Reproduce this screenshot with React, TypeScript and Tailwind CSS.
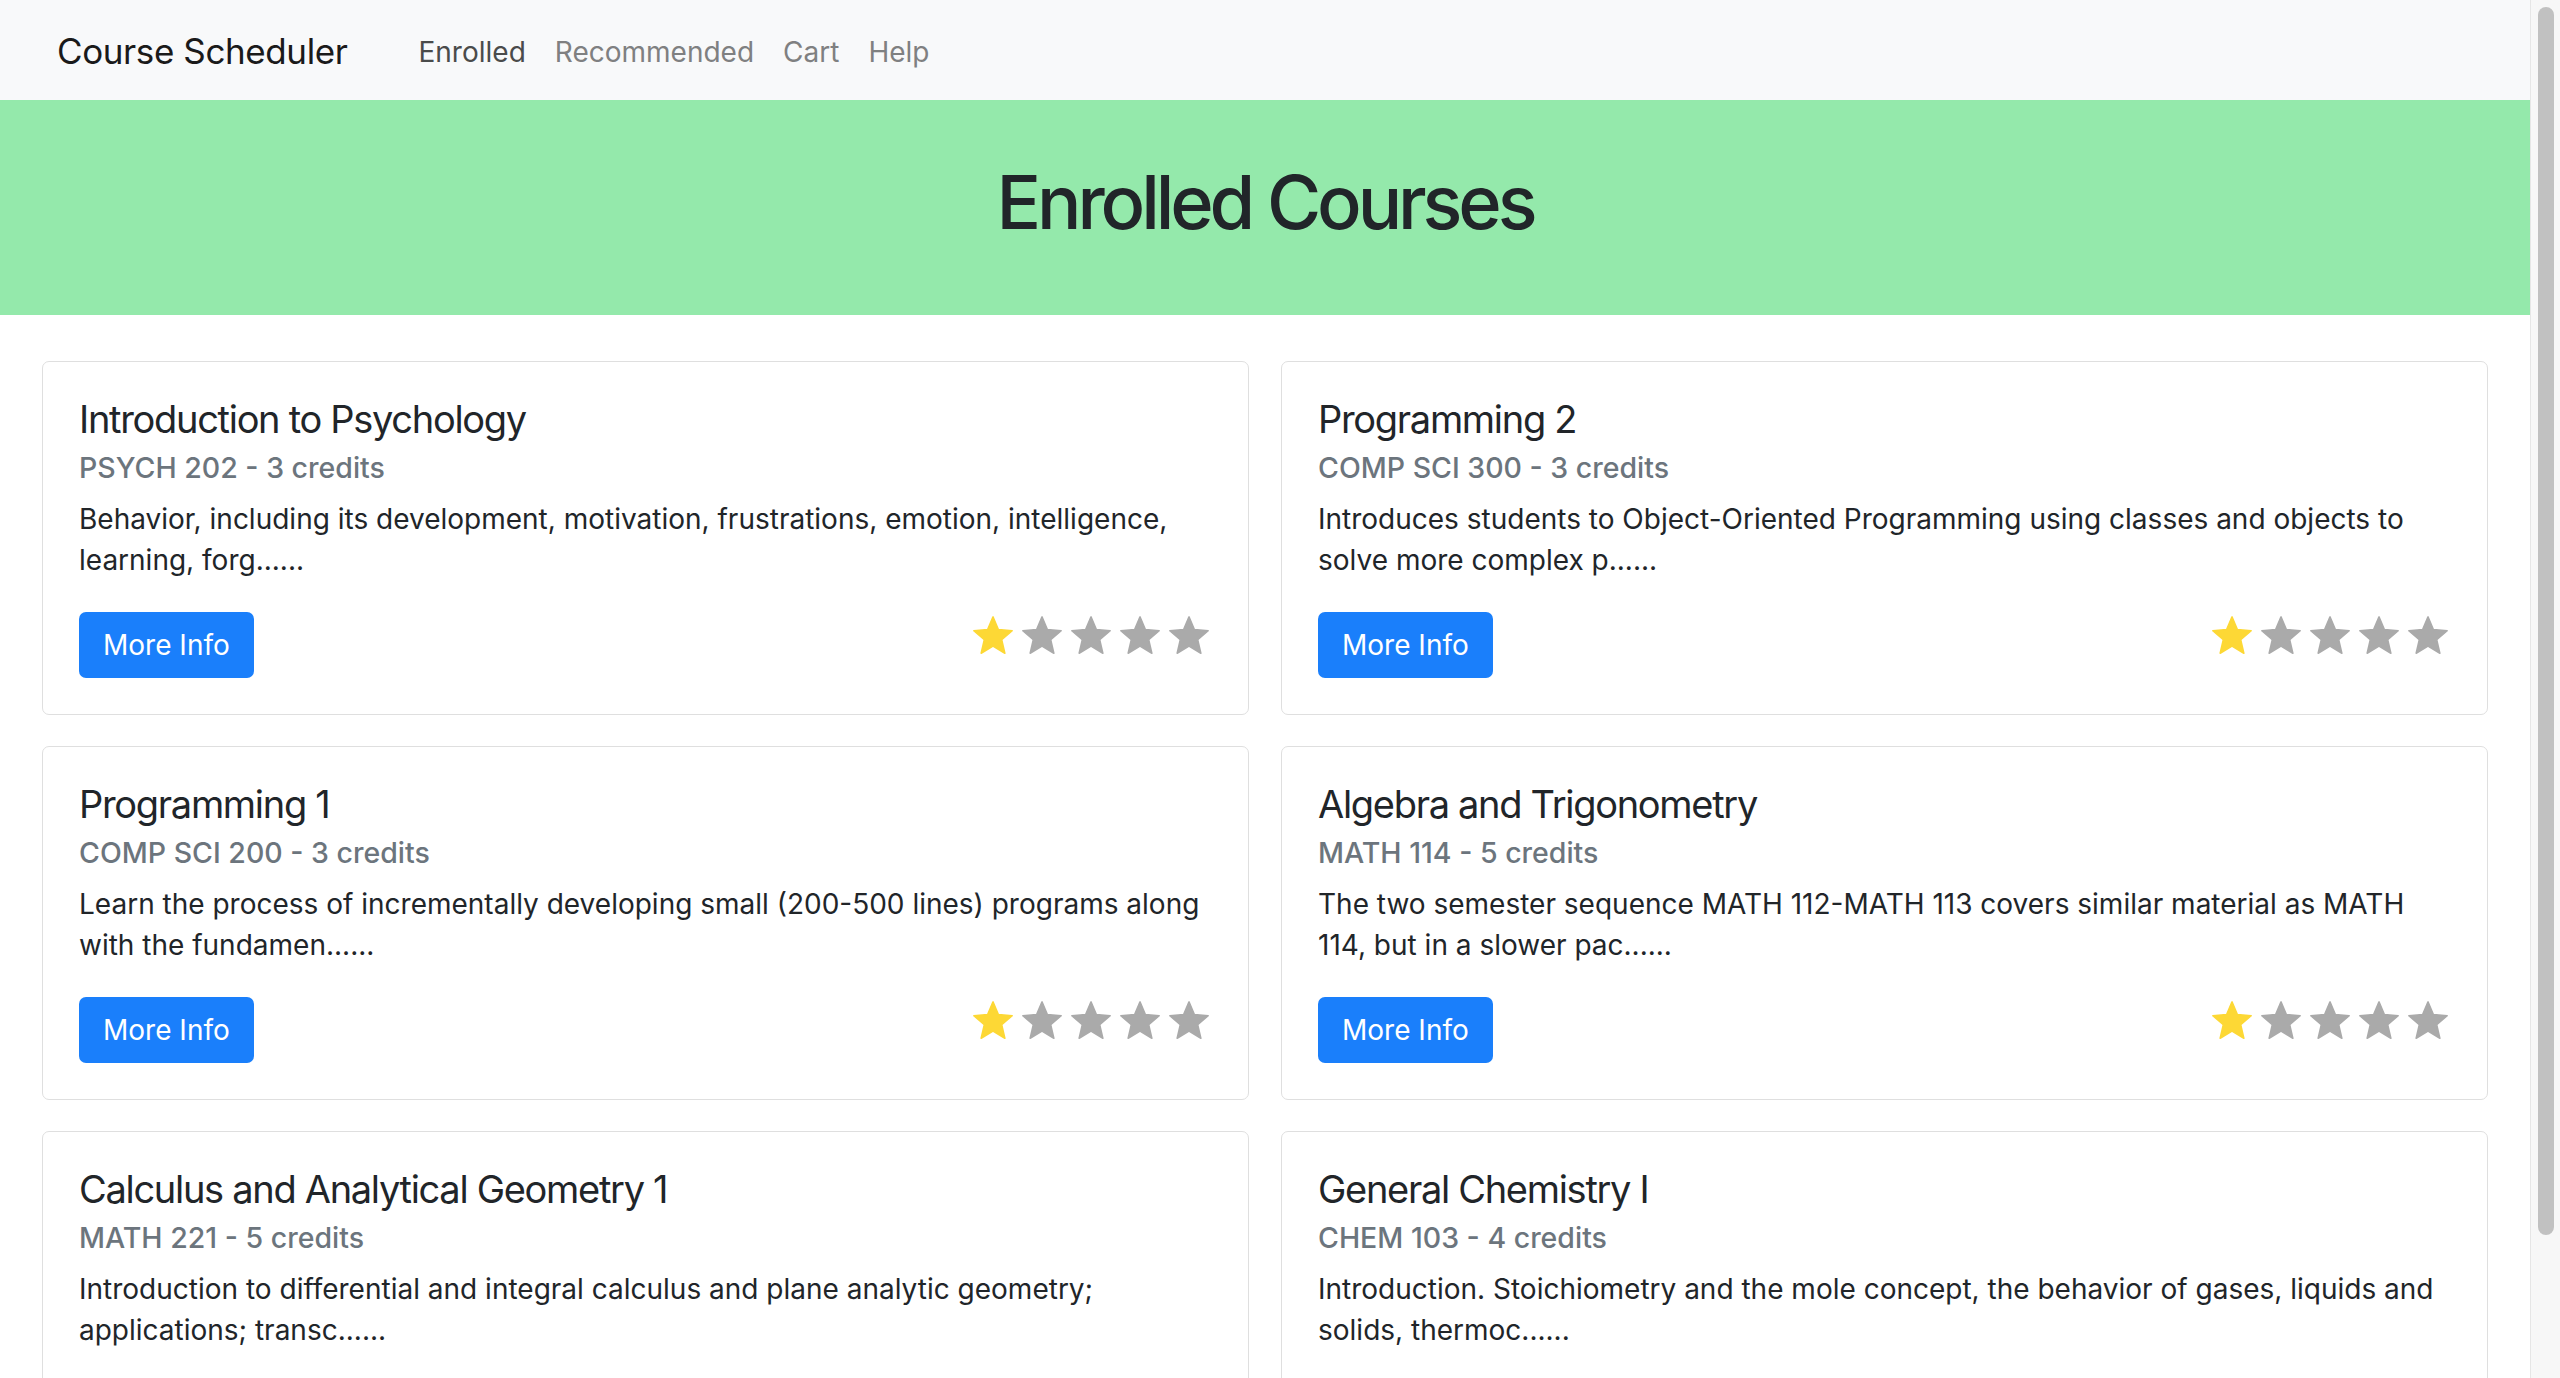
import React from "react";

type Course = {
  name: string;
  code: string;
  credits: number;
  description: string;
  rating: number;
};

const courses: Course[] = [
  {
    name: "Introduction to Psychology",
    code: "PSYCH 202",
    credits: 3,
    description: "Behavior, including its development, motivation, frustrations, emotion, intelligence, learning, forg......",
    rating: 1,
  },
  {
    name: "Programming 2",
    code: "COMP SCI 300",
    credits: 3,
    description: "Introduces students to Object-Oriented Programming using classes and objects to solve more complex p......",
    rating: 1,
  },
  {
    name: "Programming 1",
    code: "COMP SCI 200",
    credits: 3,
    description: "Learn the process of incrementally developing small (200-500 lines) programs along with the fundamen......",
    rating: 1,
  },
  {
    name: "Algebra and Trigonometry",
    code: "MATH 114",
    credits: 5,
    description: "The two semester sequence MATH 112-MATH 113 covers similar material as MATH 114, but in a slower pac......",
    rating: 1,
  },
  {
    name: "Calculus and Analytical Geometry 1",
    code: "MATH 221",
    credits: 5,
    description: "Introduction to differential and integral calculus and plane analytic geometry; applications; transc......",
    rating: 1,
  },
  {
    name: "General Chemistry I",
    code: "CHEM 103",
    credits: 4,
    description: "Introduction. Stoichiometry and the mole concept, the behavior of gases, liquids and solids, thermoc......",
    rating: 1,
  },
];

function Star({ filled }: { filled: boolean }) {
  const color = filled ? "#fdd835" : "#aaaaaa";
  return (
    <svg width="46" height="46" viewBox="0 0 24 24">
      <path
        d="M12 17.27L18.18 21l-1.64-7.03L22 9.24l-7.19-.61L12 2 9.19 8.63 2 9.24l5.46 4.73L5.82 21z"
        fill={color}
        stroke={color}
        strokeWidth="0.8"
        strokeLinejoin="round"
      />
    </svg>
  );
}

function CourseCard({ course }: { course: Course }) {
  return (
    <div className="bg-white border border-[#dfdfdf] rounded-[7px] p-[36px] flex flex-col">
      <h5 className="text-[38px] leading-[42px] tracking-[-1.3px] text-[#212529]">{course.name}</h5>
      <h6 className="text-[28.5px] leading-[32px] font-medium text-[#6c757d] mt-[12px]">
        {course.code} - {course.credits} credits
      </h6>
      <p className="text-[28px] leading-[41px] text-[#212529] mt-[15px]">{course.description}</p>
      <div className="flex items-center justify-between mt-[31px]">
        <button className="bg-[#1a7ffb] text-white text-[28px] leading-[40px] px-[24px] py-[13px] rounded-[7px]">
          More Info
        </button>
        <div className="flex gap-[3px] mb-[18px]">
          {[1, 2, 3, 4, 5].map(i => (
            <Star key={i} filled={i <= course.rating} />
          ))}
        </div>
      </div>
    </div>
  );
}

export default function App() {
  return (
    <div
      className="h-[1378px] overflow-hidden bg-white flex"
      style={{ fontFamily: "Inter, Roboto, 'Liberation Sans', sans-serif" }}
    >
      <div className="flex-1 min-w-0">
        <nav className="h-[100px] bg-[#f8f9fa] flex items-center pl-[57px] pt-[3px]">
          <span className="text-[35px] tracking-[-0.4px] text-[#1a1a1a]">Course Scheduler</span>
          <div className="flex gap-[29px] ml-[71px] text-[28px]">
            <span className="text-[#4a4b4b]">Enrolled</span>
            <span className="text-[#7f8081]">Recommended</span>
            <span className="text-[#7f8081]">Cart</span>
            <span className="text-[#7f8081]">Help</span>
          </div>
        </nav>
        <header className="h-[215px] bg-[#94e9ab] flex items-center justify-center pb-[10px]">
          <h1 className="text-[74px] font-medium tracking-[-4.1px] text-[#212529]">Enrolled Courses</h1>
        </header>
        <main className="grid grid-cols-2 gap-x-[32px] gap-y-[31px] px-[42px] pt-[46px] pb-[46px]">
          {courses.map(c => (
            <CourseCard key={c.code} course={c} />
          ))}
        </main>
      </div>
      <div className="w-[30px] shrink-0 bg-[#f7f7f7] border-l border-[#e6e6e6] pt-[7px] pl-[7px]">
        <div className="w-[16px] h-[1228px] rounded-full bg-[#c1c1c1]" />
      </div>
    </div>
  );
}
